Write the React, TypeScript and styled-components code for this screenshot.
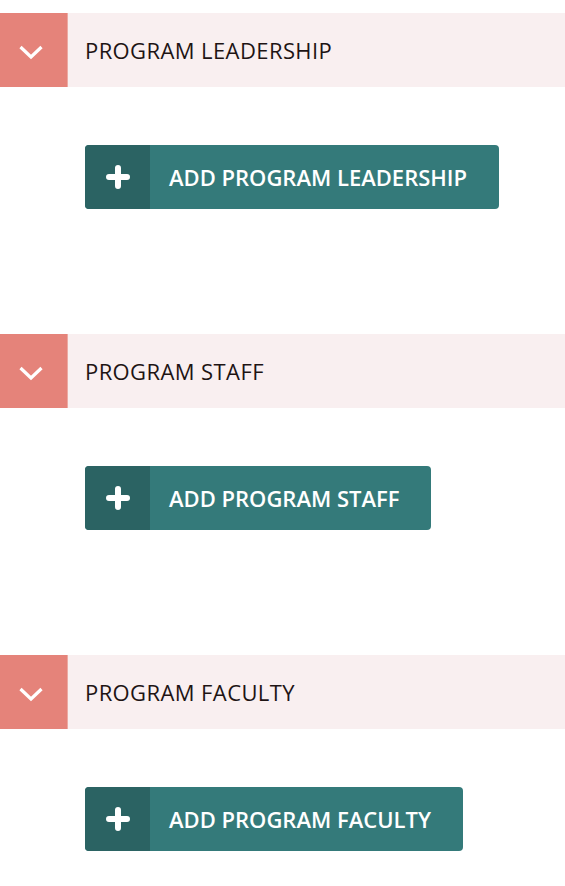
import React from "react";
import styled, { createGlobalStyle } from "styled-components";

const Global = createGlobalStyle`
  html, body { margin: 0; padding: 0; background: #ffffff; }
  body { font-family: "Open Sans", "Noto Sans", sans-serif; }
`;

const Page = styled.div`
  display: flex;
  flex-direction: column;
  padding-top: 13px;
  gap: 125px;
`;

const Section = styled.section`
  display: flex;
  flex-direction: column;
  gap: 58px;
`;

const Header = styled.div`
  display: flex;
  align-items: stretch;
  height: 74px;
  background: #f9eff0;
`;

const Toggle = styled.div`
  width: 68px;
  flex: none;
  box-sizing: border-box;
  padding: 3px 6px 0 0;
  background: #e5837a;
  display: flex;
  align-items: center;
  justify-content: center;
  border-right: 1px solid #ecaaa3;
`;

const Title = styled.h2`
  margin: 0;
  padding-left: 17px;
  display: flex;
  align-items: center;
  font-size: 22px;
  font-weight: 400;
  color: #1e1414;
  letter-spacing: 0.4px;
`;

const Body = styled.div`
  padding-left: 85px;
  display: flex;
`;

const AddButton = styled.button`
  display: flex;
  align-items: stretch;
  height: 64px;
  padding: 0;
  border: none;
  border-radius: 4px;
  overflow: hidden;
  background: #347a7a;
  cursor: pointer;
  font-family: inherit;
`;

const IconPart = styled.span`
  width: 65px;
  flex: none;
  background: #2b6363;
  display: flex;
  align-items: center;
  justify-content: center;
`;

const Label = styled.span`
  display: flex;
  align-items: center;
  padding: 0 32px 0 19px;
  color: #ffffff;
  font-size: 22px;
  font-weight: 600;
  white-space: nowrap;
`;

const Chevron = () => (
  <svg width="26" height="16" viewBox="0 0 26 16">
    <path d="M2.5 3 L13 13 L23.5 3" fill="none" stroke="#ffffff" strokeWidth="3.2" />
  </svg>
);

const Plus = () => (
  <svg width="24" height="24" viewBox="0 0 24 24">
    <path d="M12 3 V21 M3 12 H21" stroke="#ffffff" strokeWidth="6" strokeLinecap="round" />
  </svg>
);

const sections = [
  { title: "PROGRAM LEADERSHIP", action: "ADD PROGRAM LEADERSHIP" },
  { title: "PROGRAM STAFF", action: "ADD PROGRAM STAFF" },
  { title: "PROGRAM FACULTY", action: "ADD PROGRAM FACULTY" },
];

export default function App() {
  return (
    <>
      <Global />
      <Page>
        {sections.map((s) => (
          <Section key={s.title}>
            <Header>
              <Toggle>
                <Chevron />
              </Toggle>
              <Title>{s.title}</Title>
            </Header>
            <Body>
              <AddButton type="button">
                <IconPart>
                  <Plus />
                </IconPart>
                <Label>{s.action}</Label>
              </AddButton>
            </Body>
          </Section>
        ))}
      </Page>
    </>
  );
}
